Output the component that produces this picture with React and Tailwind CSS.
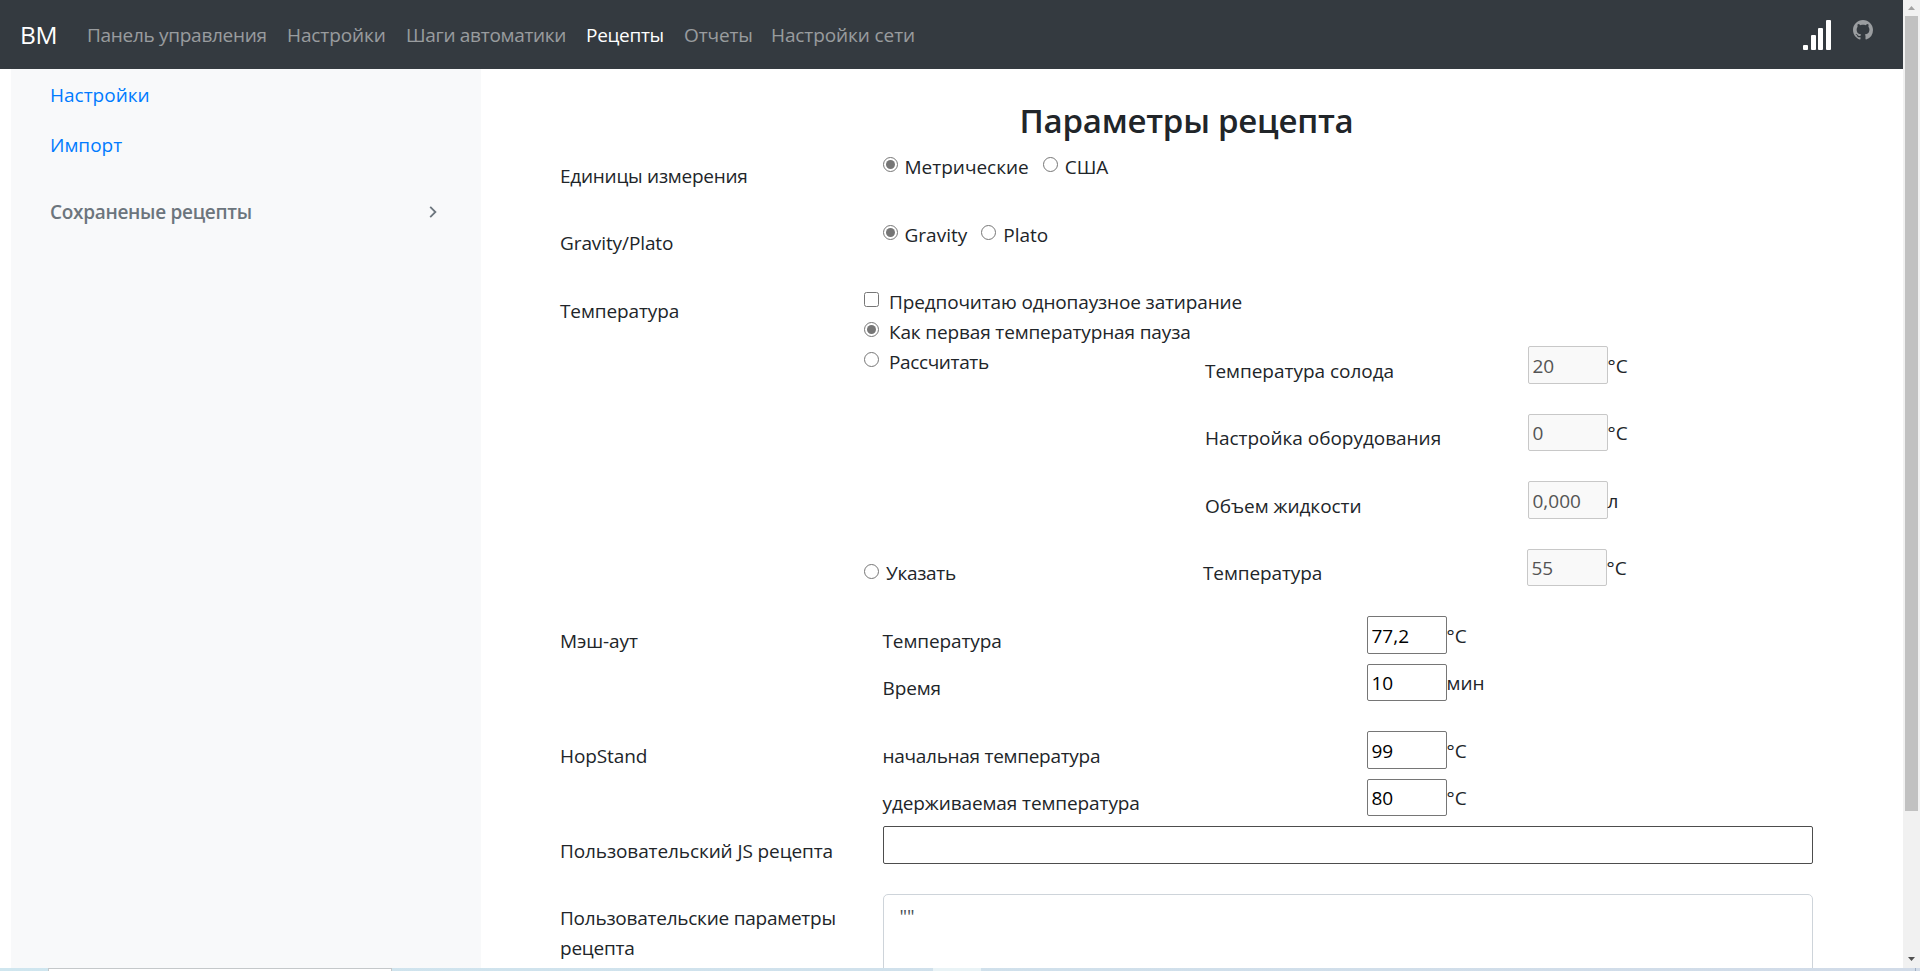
const navLinks = [
  { text: "Панель управления", style: "w-[200px] tracking-[-0.29px]" },
  { text: "Настройки", style: "w-[119px] tracking-[-0.1px]" },
  { text: "Шаги автоматики", style: "w-[180px] tracking-[-0.3px]" },
  { text: "Рецепты", style: "w-[98px] tracking-[-0.3px]", active: true },
  { text: "Отчеты", style: "w-[87px] tracking-[-0.1px]" },
  { text: "Настройки сети", style: "w-[160px] tracking-[-0.1px]" },
];

function SignalIcon() {
  return (
    <svg width="28" height="30" viewBox="0 0 28 30" fill="#fff">
      <rect x="0" y="25" width="5" height="5" rx="1" />
      <rect x="8" y="15" width="5" height="15" rx="1" />
      <rect x="15" y="8" width="5" height="22" rx="1" />
      <rect x="23" y="0" width="5" height="30" rx="1" />
    </svg>
  );
}

function GithubIcon() {
  return (
    <svg className="ml-[22px] mb-[9px] size-5 text-white/50" viewBox="0 0 16 16" fill="currentColor">
      <path d="M8 0C3.58 0 0 3.58 0 8c0 3.54 2.29 6.53 5.47 7.59.4.07.55-.17.55-.38 0-.19-.01-.82-.01-1.49-2.01.37-2.53-.49-2.69-.94-.09-.23-.48-.94-.82-1.13-.28-.15-.68-.52-.01-.53.63-.01 1.08.58 1.23.82.72 1.21 1.87.87 2.33.66.07-.52.28-.87.51-1.07-1.78-.2-3.64-.89-3.64-3.95 0-.87.31-1.59.82-2.15-.08-.2-.36-1.02.08-2.12 0 0 .67-.21 2.2.82.64-.18 1.32-.27 2-.27.68 0 1.36.09 2 .27 1.53-1.04 2.2-.82 2.2-.82.44 1.1.16 1.92.08 2.12.51.56.82 1.27.82 2.15 0 3.07-1.87 3.75-3.65 3.95.29.25.54.73.54 1.48 0 1.07-.01 1.93-.01 2.2 0 .21.15.46.55.38A8.013 8.013 0 0 0 16 8c0-4.42-3.58-8-8-8z" />
    </svg>
  );
}

function Navbar() {
  return (
    <nav className="flex h-[69px] shrink-0 items-center bg-[#343a40] pl-5 pr-[30px]">
      <a className="w-[67px] shrink-0 pt-px text-[24.5px] leading-[30px] text-white tracking-[-0.3px]">BM</a>
      <div className="flex grow">
        {navLinks.map((link) => (
          <a
            key={link.text}
            className={`shrink-0 whitespace-nowrap ${link.style} ${link.active ? "text-white" : "text-white/50"}`}
          >
            {link.text}
          </a>
        ))}
      </div>
      <SignalIcon />
      <GithubIcon />
    </nav>
  );
}

function Sidebar() {
  return (
    <aside className="ml-[11px] w-[470px] shrink-0 bg-[#f8f9fa] pt-[11px] pl-[39px] pr-[44px]">
      <a className="block text-[#007bff]">Настройки</a>
      <a className="mt-5 block text-[#007bff]">Импорт</a>
      <div className="mt-[37px] flex items-center justify-between font-semibold text-[#6c757d]">
        <span className="tracking-[-0.3px]">Сохраненые рецепты</span>
        <svg width="8" height="12" viewBox="0 0 8 12" fill="none" stroke="currentColor" strokeWidth="1.8">
          <path d="M1.2 0.8L6.4 6L1.2 11.2" />
        </svg>
      </div>
    </aside>
  );
}

function Option({ type = "radio", name, label, checked = false, gap = "gap-[7px]", labelClass = "pt-px" }) {
  return (
    <label className={`flex h-[30px] ${gap}`}>
      <input type={type} name={name} defaultChecked={checked} className="mt-[6px] size-[15px] accent-[#767676]" />
      <span className={`whitespace-nowrap ${labelClass}`}>{label}</span>
    </label>
  );
}

function Label({ children, width = "w-[322.5px]" }) {
  return <div className={`shrink-0 pt-[9.4px] ${width}`}>{children}</div>;
}

function NumberField({ value, unit, disabled = false }) {
  return (
    <div className="flex tracking-normal">
      <input
        defaultValue={value}
        disabled={disabled}
        className={`h-[37.5px] w-20 rounded-[2px] border px-1 pt-px ${
          disabled ? "border-[#c8c8c8] bg-[#f9f9f9] text-[#545454]" : "border-[#767676] bg-white text-black"
        }`}
      />
      <span className="pt-[4.4px]">{unit}</span>
    </div>
  );
}

// one label + number field line, nested inside a form row
function FieldRow({ label, labelWidth, className = "mb-5", ...field }) {
  return (
    <div className={`flex h-[47.5px] ${className}`}>
      <Label width={labelWidth}>{label}</Label>
      <NumberField {...field} />
    </div>
  );
}

function RecipeForm() {
  return (
    <main className="ml-[79px] w-[1253px] shrink-0 pt-[31.25px] tracking-[-0.1px]">
      <h3 className="mb-[9px] text-center text-[33px] leading-[42px] font-semibold tracking-[-0.25px]">
        Параметры рецепта
      </h3>

      <div className="mb-5 flex h-[47.5px]">
        <Label width="w-[322.5px] tracking-[-0.25px]">Единицы измерения</Label>
        <div className="flex gap-[14px] tracking-normal">
          <Option name="units" label="Метрические" checked />
          <Option name="units" label="США" />
        </div>
      </div>

      <div className="mb-5 flex h-[47.5px]">
        <Label>Gravity/Plato</Label>
        <div className="flex gap-[14px] tracking-normal">
          <Option name="gravity" label="Gravity" checked />
          <Option name="gravity" label="Plato" />
        </div>
      </div>

      <div className="flex">
        <Label width="w-[304px]">Температура</Label>
        <div>
          <Option
            type="checkbox"
            label="Предпочитаю однопаузное затирание"
            gap="gap-[10px]"
            labelClass="pt-px tracking-[-0.14px]"
          />
          <Option
            name="strike"
            label="Как первая температурная пауза"
            checked
            gap="gap-[10px]"
            labelClass="pt-px tracking-[-0.14px]"
          />
          <div className="flex">
            <div className="w-[341px]">
              <Option name="strike" label="Рассчитать" gap="gap-[10px]" labelClass="pt-px tracking-[-0.37px]" />
            </div>
            <div className="tracking-[-0.03px]">
              <FieldRow label="Температура солода" value="20" unit="°C" disabled />
              <FieldRow label="Настройка оборудования" value="0" unit="°C" disabled />
              <FieldRow label="Объем жидкости" value="0,000" unit="л" disabled />
            </div>
          </div>
          <div className="flex">
            <div className="w-[339px] pt-[9px]">
              <Option name="strike" label="Указать" labelClass="tracking-[-0.3px]" />
            </div>
            <FieldRow label="Температура" labelWidth="w-[323.5px]" value="55" unit="°C" disabled />
          </div>
        </div>
      </div>

      <div className="mb-5 flex">
        <Label>Мэш-аут</Label>
        <div>
          <FieldRow label="Температура" labelWidth="w-[484px]" className="" value="77,2" unit="°C" />
          <FieldRow label="Время" labelWidth="w-[484px]" className="" value="10" unit="мин" />
        </div>
      </div>

      <div className="flex">
        <Label>HopStand</Label>
        <div>
          <FieldRow
            label="начальная температура"
            labelWidth="w-[484px] tracking-[-0.28px]"
            className=""
            value="99"
            unit="°C"
          />
          <FieldRow label="удерживаемая температура" labelWidth="w-[484px]" className="" value="80" unit="°C" />
        </div>
      </div>

      <div className="mb-5 flex h-[47.5px]">
        <Label>Пользовательский JS рецепта</Label>
        <input className="h-[38px] grow rounded-[2px] border border-[#4d4d4d]" />
      </div>

      <div className="flex">
        <Label width="w-[322.5px] tracking-[-0.24px]">Пользовательские параметры рецепта</Label>
        <textarea
          defaultValue={'""'}
          className="h-[200px] grow resize-none rounded-[5px] border border-[#ced4da] px-4 py-[6px] text-[#495057]"
        />
      </div>
    </main>
  );
}

function Scrollbar() {
  return (
    <div className="flex w-[17px] shrink-0 flex-col items-center bg-[#f1f1f1]">
      <svg className="mt-[6px] mb-[6px]" width="7" height="4" viewBox="0 0 7 4" fill="#a3a3a3">
        <path d="M0 4L3.5 0L7 4z" />
      </svg>
      <div className="h-[795px] w-[13px] bg-[#c1c1c1]" />
      <svg className="mt-auto mb-[7px]" width="7" height="4" viewBox="0 0 7 4" fill="#505050">
        <path d="M0 0L3.5 4L7 0z" />
      </svg>
    </div>
  );
}

// top edge of the desktop taskbar
function TaskbarEdge() {
  return (
    <div className="flex h-[3px] shrink-0 bg-linear-to-r from-[#cfe6ef] to-[#d1dbe8]">
      <div className="ml-12 w-[344px] border border-b-0 border-[#c4c8ca] bg-white" />
      <div className="ml-[541px] w-12 bg-[#e9f3f6]" />
      <div className="ml-auto mr-1 w-px bg-[#a3b0c2]" />
    </div>
  );
}

export default function App() {
  return (
    <div className="flex h-[971px] w-[1920px] flex-col overflow-hidden bg-white font-['Open_Sans','Noto_Sans',sans-serif] text-[19px] leading-[30px] text-[#212529]">
      <div className="flex h-[968px] overflow-hidden">
        <div className="flex w-[1903px] flex-col overflow-hidden">
          <Navbar />
          <div className="flex min-h-0 grow overflow-hidden">
            <Sidebar />
            <RecipeForm />
          </div>
        </div>
        <Scrollbar />
      </div>
      <TaskbarEdge />
    </div>
  );
}
